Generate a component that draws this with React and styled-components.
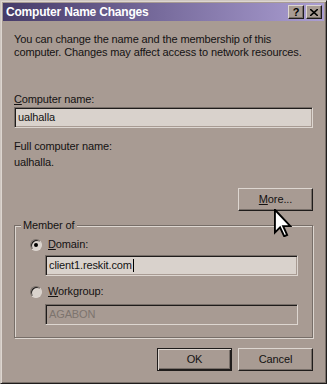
import styled, { createGlobalStyle } from "styled-components";

const face = "#a89b93";
const light = "#ddd6d0";
const shadow = "#776e68";
const dark = "#1f1c1b";
const field = "#d9d2cc";

const GlobalStyle = createGlobalStyle`
  html, body {
    margin: 0;
    padding: 0;
    background: ${face};
  }
  body {
    font-family: "Liberation Sans", Arial, sans-serif;
    font-size: 11px;
    letter-spacing: -0.12px;
    color: #141212;
  }
`;

const Window = styled.div`
  position: relative;
  width: 327px;
  height: 384px;
  box-sizing: border-box;
  background: ${face};
  border: 1px solid;
  border-color: #cfc7c1 ${dark} ${dark} #cfc7c1;
  box-shadow: inset 1px 1px 0 ${light}, inset -1px -1px 0 ${shadow};
  padding: 2px;
  display: flex;
  flex-direction: column;
`;

const TitleBar = styled.div`
  height: 18px;
  display: flex;
  align-items: center;
  padding: 0 2px 0 3px;
  background: linear-gradient(to right, #463b69, #ab9ed2);
  color: #fff;
  font-weight: bold;
  font-size: 12px;
  letter-spacing: -0.2px;
`;

const TitleText = styled.span`
  flex: 1;
`;

const TitleButtons = styled.div`
  display: flex;
  gap: 2px;
`;

const TitleButton = styled.div`
  width: 16px;
  height: 14px;
  box-sizing: border-box;
  background: ${face};
  border: 1px solid;
  border-color: ${light} ${dark} ${dark} ${light};
  box-shadow: inset -1px -1px 0 ${shadow};
  color: #000;
  font-weight: bold;
  font-size: 11px;
  line-height: 12px;
  text-align: center;
  display: flex;
  align-items: center;
  justify-content: center;
`;

const Body = styled.div`
  display: flex;
  flex-direction: column;
  padding: 12px 11px 0 11px;
  line-height: 13px;
`;

const Text = styled.div`
  margin-top: ${(p) => p.$top || 0}px;
`;

const Field = styled.div`
  height: 21px;
  box-sizing: border-box;
  margin-top: ${(p) => p.$top || 0}px;
  margin-left: ${(p) => p.$left || 0}px;
  background: ${(p) => (p.$disabled ? face : field)};
  color: ${(p) => (p.$disabled ? "#7d746e" : "#141212")};
  border: 1px solid;
  border-color: ${shadow} ${light} ${light} ${shadow};
  box-shadow: inset 1px 1px 0 ${dark}, inset -1px -1px 0 ${face};
  padding: 0 3px;
  display: flex;
  align-items: center;
  white-space: nowrap;
`;

const Caret = styled.span`
  display: inline-block;
  width: 1px;
  height: 13px;
  background: #000;
  margin-left: 1px;
`;

const ButtonRow = styled.div`
  display: flex;
  justify-content: flex-end;
  gap: 6px;
  margin-top: ${(p) => p.$top || 0}px;
`;

const Button = styled.div`
  width: 75px;
  height: 23px;
  box-sizing: border-box;
  display: flex;
  align-items: center;
  justify-content: center;
  border: 1px solid;
  border-color: ${(p) => (p.$default ? dark : `${light} ${dark} ${dark} ${light}`)};
  box-shadow: ${(p) =>
    p.$default
      ? `inset 1px 1px 0 ${light}, inset -1px -1px 0 ${dark}, inset -2px -2px 0 ${shadow}`
      : `inset -1px -1px 0 ${shadow}`};
  background: ${face};
`;

const Group = styled.fieldset`
  margin: 8px 0 0 0;
  padding: 6px 14px 12px 15px;
  border: 1px solid ${shadow};
  box-shadow: inset 1px 1px 0 ${light}, 1px 1px 0 ${light};
  display: flex;
  flex-direction: column;
`;

const Legend = styled.legend`
  margin-left: -9px;
  padding: 0 2px;
  background: ${face};
  line-height: 13px;
`;

const RadioRow = styled.div`
  display: flex;
  align-items: center;
  gap: 6px;
  height: 13px;
  margin-top: ${(p) => p.$top || 0}px;
`;

const Radio = styled.span`
  position: relative;
  width: 12px;
  height: 12px;
  box-sizing: border-box;
  border-radius: 50%;
  border: 1px solid;
  border-color: ${shadow} ${light} ${light} ${shadow};
  background: ${field};
  box-shadow: inset 1px 1px 0 ${dark};

  &::after {
    content: "";
    display: ${(p) => (p.$checked ? "block" : "none")};
    position: absolute;
    left: 3px;
    top: 3px;
    width: 4px;
    height: 4px;
    border-radius: 50%;
    background: #000;
  }
`;

const Pointer = styled.svg`
  position: absolute;
  left: 273px;
  top: 208px;
`;

export default function App() {
  return (
    <>
      <GlobalStyle />
      <Window>
        <TitleBar>
          <TitleText>Computer Name Changes</TitleText>
          <TitleButtons>
            <TitleButton>?</TitleButton>
            <TitleButton>
              <svg width="8" height="7" viewBox="0 0 8 7">
                <path d="M0 0 L8 7 M8 0 L0 7" stroke="#000" strokeWidth="1.6" />
              </svg>
            </TitleButton>
          </TitleButtons>
        </TitleBar>
        <Body>
          <Text>
            You can change the name and the membership of this
            <br />
            computer. Changes may affect access to network resources.
          </Text>
          <Text $top={34}>
            <u>C</u>omputer name:
          </Text>
          <Field $top={1}>ualhalla</Field>
          <Text $top={12}>Full computer name:</Text>
          <Text $top={3}>ualhalla.</Text>
          <ButtonRow $top={19}>
            <Button>
              <span>
                <u>M</u>ore...
              </span>
            </Button>
          </ButtonRow>
          <Group>
            <Legend>Member of</Legend>
            <RadioRow>
              <Radio $checked />
              <span>
                <u>D</u>omain:
              </span>
            </RadioRow>
            <Field $top={4} $left={15}>
              client1.reskit.com
              <Caret />
            </Field>
            <RadioRow $top={9}>
              <Radio />
              <span>
                <u>W</u>orkgroup:
              </span>
            </RadioRow>
            <Field $top={6} $left={15} $disabled>
              AGABON
            </Field>
          </Group>
          <ButtonRow $top={10}>
            <Button $default>OK</Button>
            <Button>Cancel</Button>
          </ButtonRow>
        </Body>
        <Pointer width="18" height="28" viewBox="0 0 12 19">
          <path
            d="M0.5 0.5 L0.5 16 L4 12.5 L6.8 18.5 L8.8 17.6 L6.1 11.6 L11 11.6 Z"
            fill="#fff"
            stroke="#000"
            strokeWidth="1.3"
            strokeLinejoin="miter"
          />
        </Pointer>
      </Window>
    </>
  );
}
